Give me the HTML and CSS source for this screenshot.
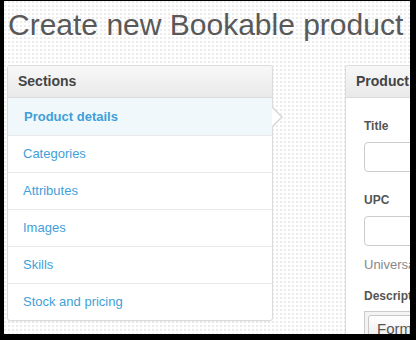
FILE: index.html
```html
<!DOCTYPE html>
<html lang="en">
<head>
    <meta charset="UTF-8">
    <title>Create new Bookable product</title>
    <link rel="stylesheet" href="styles.css">
</head>
<body>
    <div class="frame">
        <h1 class="page-title">Create new Bookable product</h1>

        <div class="columns">
            <!-- left: section list -->
            <div class="panel sections">
                <div class="panel-head">Sections</div>
                <ul class="nav-list">
                    <li class="active"><a href="#">Product details</a></li>
                    <li><a href="#">Categories</a></li>
                    <li><a href="#">Attributes</a></li>
                    <li><a href="#">Images</a></li>
                    <li><a href="#">Skills</a></li>
                    <li><a href="#">Stock and pricing</a></li>
                </ul>
            </div>

            <!-- right: form -->
            <div class="panel details">
                <div class="panel-head">Product details</div>
                <div class="panel-body">
                    <div class="field">
                        <label>Title</label>
                        <input type="text">
                    </div>
                    <div class="field">
                        <label>UPC</label>
                        <input type="text">
                        <p class="help">Universal Product Code (UPC) is an identifier</p>
                    </div>
                    <div class="field">
                        <label>Description</label>
                        <div class="editor">
                            <span class="tool-btn">Formats</span>
                        </div>
                    </div>
                </div>
            </div>
        </div>
    </div>
</body>
</html>
```
FILE: styles.css
```css
body {
    margin: 0;
    background: #000;
    font-family: "Liberation Sans", Arial, sans-serif;
}

.frame {
    margin: 1px 0 0 4px;
    width: 406px;
    height: 333px;
    overflow: hidden;
    padding-left: 3px;
    box-sizing: border-box;
    background-color: #fff;
    background-image: radial-gradient(circle at 1px 1px, #ebebeb 0.7px, transparent 0.9px);
    background-size: 4px 4px;
}

.page-title {
    margin: 0 0 0 1px;
    padding-top: 6px;
    font-size: 30px;
    line-height: 36px;
    font-weight: normal;
    color: #595959;
    white-space: nowrap;
}

.columns {
    display: flex;
    gap: 72px;
    margin-top: 22px;
    align-items: flex-start;
}

.panel {
    flex: none;
    background: #fff;
    border: 1px solid #dcdcdc;
    border-radius: 3px;
    box-shadow: 0 1px 2px rgba(0, 0, 0, 0.05);
}

.sections {
    width: 266px;
    box-sizing: border-box;
}

.details {
    width: 320px;
}

.panel-head {
    height: 31px;
    line-height: 31px;
    padding-left: 10px;
    font-size: 14px;
    font-weight: bold;
    color: #444;
    white-space: nowrap;
    background: linear-gradient(#f8f8f8, #e9e9e9);
    border-bottom: 1px solid #dcdcdc;
    border-radius: 3px 3px 0 0;
}

.nav-list {
    list-style: none;
    margin: 0;
    padding: 0;
}

.nav-list li {
    position: relative;
    height: 36px;
    line-height: 36px;
    border-bottom: 1px solid #e9e9e9;
}

.nav-list li:last-child {
    border-bottom: 0;
}

.nav-list a {
    display: block;
    padding-left: 15px;
    font-size: 13px;
    color: #3f9fd9;
    text-decoration: none;
}

.nav-list li.active {
    height: 37px;
    line-height: 37px;
    background: #f1f8fc;
}

.nav-list li.active a {
    font-weight: bold;
    padding-left: 16px;
}

/* arrow sticking out of the active row */
.nav-list li.active::before,
.nav-list li.active::after {
    content: "";
    position: absolute;
    top: 50%;
    border-style: solid;
    border-color: transparent;
}
.nav-list li.active::before {
    right: -11px;
    margin-top: -10px;
    border-width: 10px 0 10px 10px;
    border-left-color: #d6d6d6;
}
.nav-list li.active::after {
    right: -9px;
    margin-top: -9px;
    border-width: 9px 0 9px 9px;
    border-left-color: #fff;
}

.panel-body {
    padding: 19px 18px 0;
}

.field {
    margin-bottom: 19px;
}

.field label {
    display: block;
    font-size: 12px;
    line-height: 18px;
    font-weight: bold;
    color: #555;
    margin-bottom: 7px;
}

.field input {
    display: block;
    width: 280px;
    height: 30px;
    box-sizing: border-box;
    border: 1px solid #ccc;
    border-radius: 4px;
    background: #fff;
}

.help {
    margin: 10px 0 0;
    font-size: 13px;
    line-height: 18px;
    color: #888;
    white-space: nowrap;
}

.field:nth-child(2) {
    margin-bottom: 13px;
}

.editor {
    margin-top: -1px;
    border: 1px solid #ccc;
    padding: 3px;
    height: 40px;
    background: #f4f4f4;
}

.tool-btn {
    display: inline-block;
    padding: 0 8px;
    height: 26px;
    line-height: 26px;
    font-size: 15px;
    color: #555;
    border: 1px solid #c8c8c8;
    border-radius: 3px;
    background: linear-gradient(#fff, #e8e8e8);
}
```
